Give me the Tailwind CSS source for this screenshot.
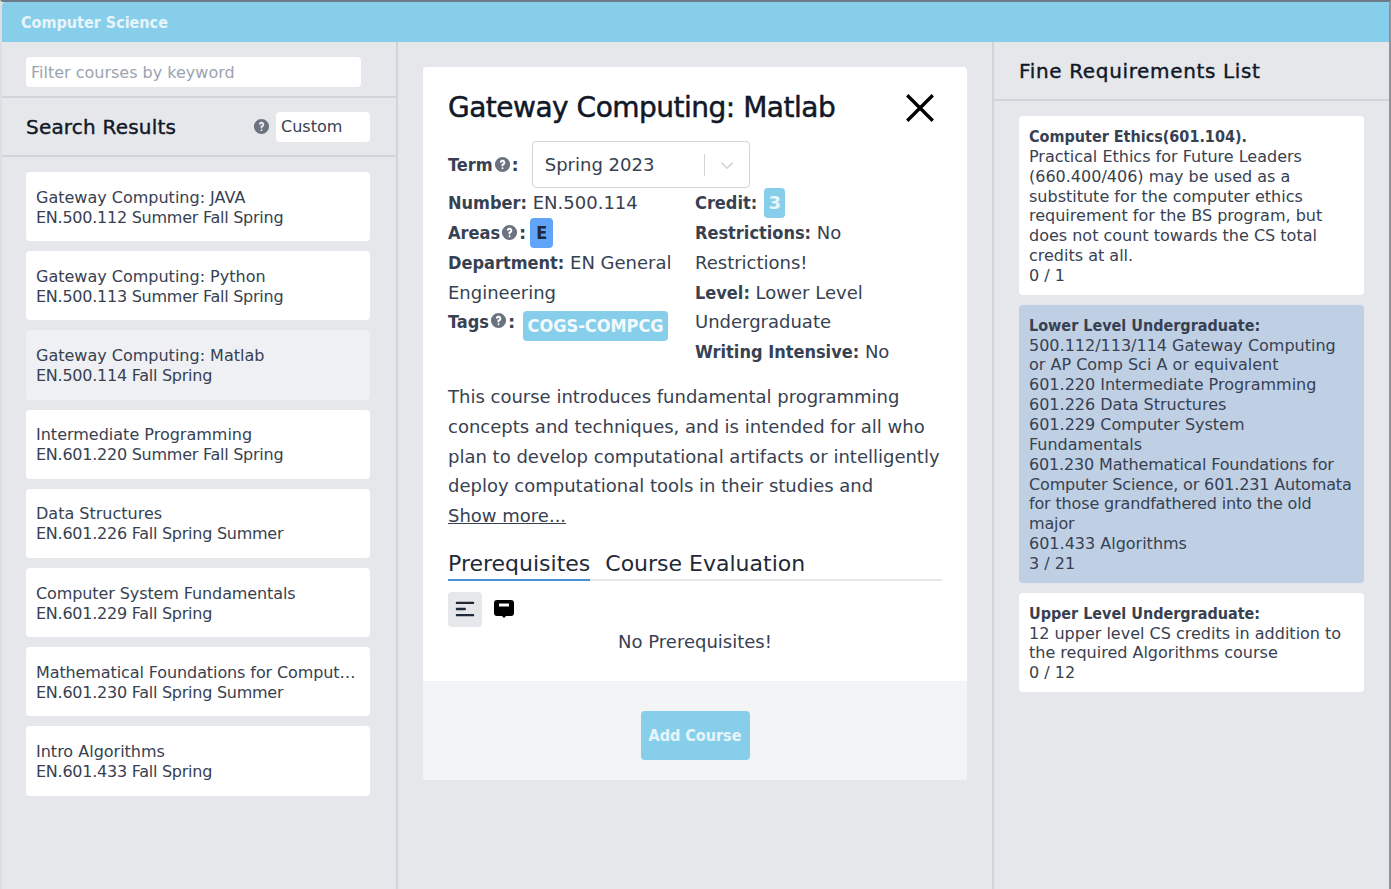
<!DOCTYPE html>
<html lang="en">

<head>
  <meta charset="UTF-8" />
  <meta name="viewport" content="width=device-width, initial-scale=1" />
  <script src="https://cdn.jsdelivr.net/npm/@tailwindcss/browser@4"></script>
  <title>Computer Science</title>
</head>

<body class="h-[889px] overflow-hidden border-t-2 border-r-2 border-l-2 border-t-[#6b7b88] border-r-[#8b939c] border-l-[#dcdfe4] bg-[#e5e7eb] font-['DejaVu_Sans',sans-serif] text-[#374151]">
  <div class="flex h-[40px] items-center rounded-tl-sm bg-[#87ceeb] pl-[19px] pt-[2px] font-['DejaVu_Sans_Condensed',sans-serif] text-[16px] font-bold text-white/80">Computer Science</div>

  <div class="flex h-[847px] bg-[#e5e7eb]">
    <!-- search column -->
    <aside class="w-[396px] shrink-0 border-r-2 border-[#d1d5db]">
      <div class="h-[56px] border-b-2 border-[#d1d5db] px-6 pt-[15px]">
        <input placeholder="Filter courses by keyword" class="h-[30px] w-[335px] rounded bg-white px-[5px] text-[16px] placeholder:text-[#9ca3af]" />
      </div>
      <div class="flex h-[59px] items-center border-b-2 border-[#d1d5db] pl-6 pr-[26px]">
        <h2 class="text-[20px] tracking-[0.2px] text-[#111827] [-webkit-text-stroke:0.4px]">Search Results</h2>
        <svg class="ml-auto h-[19px] w-[19px] text-[#6b7280]" viewBox="0 0 20 20" fill="currentColor"><path fill-rule="evenodd" d="M18 10a8 8 0 1 1-16 0 8 8 0 0 1 16 0Zm-8-3a1 1 0 0 0-.87.5 1 1 0 1 1-1.73-1A3 3 0 0 1 13 8a3 3 0 0 1-2 2.83V11a1 1 0 1 1-2 0v-1a1 1 0 0 1 1-1 1 1 0 1 0 0-2Zm0 8a1 1 0 1 0 0-2 1 1 0 0 0 0 2Z" clip-rule="evenodd" /></svg>
        <div class="ml-[5px] flex h-[30px] w-[94px] items-center rounded bg-white px-[5px] text-[16px]">Custom</div>
      </div>
      <ul class="flex flex-col gap-[10px] pl-6 pr-[26px] pt-[15px] text-[16px] leading-[20px]">
        <li class="flex h-[69.2px] flex-col justify-center rounded bg-white px-[10px] pt-[2px]"><p>Gateway Computing: JAVA</p><p class="tracking-[-0.25px]">EN.500.112 Summer Fall Spring</p></li>
        <li class="flex h-[69.2px] flex-col justify-center rounded bg-white px-[10px] pt-[2px]"><p>Gateway Computing: Python</p><p class="tracking-[-0.25px]">EN.500.113 Summer Fall Spring</p></li>
        <li class="flex h-[69.2px] flex-col justify-center rounded bg-[#eef0f3] px-[10px] pt-[2px]"><p>Gateway Computing: Matlab</p><p class="tracking-[-0.25px]">EN.500.114 Fall Spring</p></li>
        <li class="flex h-[69.2px] flex-col justify-center rounded bg-white px-[10px] pt-[2px]"><p>Intermediate Programming</p><p class="tracking-[-0.25px]">EN.601.220 Summer Fall Spring</p></li>
        <li class="flex h-[69.2px] flex-col justify-center rounded bg-white px-[10px] pt-[2px]"><p>Data Structures</p><p class="tracking-[-0.25px]">EN.601.226 Fall Spring Summer</p></li>
        <li class="flex h-[69.2px] flex-col justify-center rounded bg-white px-[10px] pt-[2px]"><p class="tracking-[-0.1px]">Computer System Fundamentals</p><p class="tracking-[-0.25px]">EN.601.229 Fall Spring</p></li>
        <li class="flex h-[69.2px] flex-col justify-center rounded bg-white px-[10px] pt-[2px]"><p class="truncate tracking-[-0.1px]">Mathematical Foundations for Computer Science</p><p class="tracking-[-0.25px]">EN.601.230 Fall Spring Summer</p></li>
        <li class="flex h-[69.2px] flex-col justify-center rounded bg-white px-[10px] pt-[2px]"><p>Intro Algorithms</p><p class="tracking-[-0.25px]">EN.601.433 Fall Spring</p></li>
      </ul>
    </aside>

    <!-- course details -->
    <main class="w-[596px] shrink-0 border-r-2 border-[#d1d5db] pl-[25px] pt-[25px]">
      <section class="flex h-[713px] w-[544px] flex-col overflow-hidden rounded bg-white">
        <div class="h-[614px] px-[25px] pt-[21px] text-[18px] leading-[29.8px]">
          <div class="flex h-[40px] items-center justify-between">
            <h1 class="text-[28px] tracking-[-0.5px] text-[#111827] [-webkit-text-stroke:0.5px]">Gateway Computing: Matlab</h1>
            <svg class="mr-[4px] h-[36px] w-[36px] text-black" viewBox="0 0 24 24" fill="none" stroke="currentColor" stroke-width="2.2"><path d="M3.5 3.5l17 17M20.5 3.5l-17 17" /></svg>
          </div>
          <div class="mt-[13px] flex h-[47px] items-center">
            <b class="font-['DejaVu_Sans_Condensed',sans-serif]">Term</b>
            <svg class="h-[19px] w-[19px] text-[#6b7280]" viewBox="0 0 20 20" fill="currentColor"><path fill-rule="evenodd" d="M18 10a8 8 0 1 1-16 0 8 8 0 0 1 16 0Zm-8-3a1 1 0 0 0-.87.5 1 1 0 1 1-1.73-1A3 3 0 0 1 13 8a3 3 0 0 1-2 2.83V11a1 1 0 1 1-2 0v-1a1 1 0 0 1 1-1 1 1 0 1 0 0-2Zm0 8a1 1 0 1 0 0-2 1 1 0 0 0 0 2Z" clip-rule="evenodd" /></svg>
            <b>:</b>
            <div class="ml-[13px] flex h-[47px] w-[218px] items-center rounded border border-[#d1d5db] pl-[12px]">
              <span>Spring 2023</span>
              <span class="ml-auto h-[22px] w-px bg-[#d1d5db]"></span>
              <svg class="mx-[14px] h-[16px] w-[16px] text-[#d1d5db]" viewBox="0 0 20 20" fill="none" stroke="currentColor" stroke-width="2"><path d="M3 7l7 7 7-7" /></svg>
            </div>
          </div>
          <div class="flex">
            <div class="w-[247px] shrink-0">
              <p class="whitespace-nowrap"><b class="font-['DejaVu_Sans_Condensed',sans-serif]">Number:</b> EN.500.114</p>
              <p class="flex items-center"><b class="font-['DejaVu_Sans_Condensed',sans-serif]">Areas</b>
                <svg class="h-[19px] w-[19px] text-[#6b7280]" viewBox="0 0 20 20" fill="currentColor"><path fill-rule="evenodd" d="M18 10a8 8 0 1 1-16 0 8 8 0 0 1 16 0Zm-8-3a1 1 0 0 0-.87.5 1 1 0 1 1-1.73-1A3 3 0 0 1 13 8a3 3 0 0 1-2 2.83V11a1 1 0 1 1-2 0v-1a1 1 0 0 1 1-1 1 1 0 1 0 0-2Zm0 8a1 1 0 1 0 0-2 1 1 0 0 0 0 2Z" clip-rule="evenodd" /></svg>
                <b>:</b><span class="ml-[4px] flex h-[30px] w-[23px] items-center justify-center rounded bg-[#60a5fa] font-['DejaVu_Sans_Condensed',sans-serif] font-bold text-[#1f2937]">E</span></p>
              <p><b class="font-['DejaVu_Sans_Condensed',sans-serif]">Department:</b> EN General</p>
              <p>Engineering</p>
              <div class="flex items-start"><b class="font-['DejaVu_Sans_Condensed',sans-serif]">Tags</b>
                <svg class="mt-[4px] h-[19px] w-[19px] text-[#6b7280]" viewBox="0 0 20 20" fill="currentColor"><path fill-rule="evenodd" d="M18 10a8 8 0 1 1-16 0 8 8 0 0 1 16 0Zm-8-3a1 1 0 0 0-.87.5 1 1 0 1 1-1.73-1A3 3 0 0 1 13 8a3 3 0 0 1-2 2.83V11a1 1 0 1 1-2 0v-1a1 1 0 0 1 1-1 1 1 0 1 0 0-2Zm0 8a1 1 0 1 0 0-2 1 1 0 0 0 0 2Z" clip-rule="evenodd" /></svg>
                <b>:</b><span class="ml-[8px] mt-[4px] flex h-[30px] w-[145px] items-center justify-center whitespace-nowrap rounded bg-[#87ceeb] font-['DejaVu_Sans_Condensed',sans-serif] font-bold text-white/90">COGS-COMPCG</span></div>
            </div>
            <div class="w-[220px]">
              <p class="flex items-center"><b class="font-['DejaVu_Sans_Condensed',sans-serif]">Credit:</b><span class="ml-[7px] flex h-[30px] w-[21px] items-center justify-center rounded bg-[#87ceeb] font-bold text-white/80">3</span></p>
              <p><b class="font-['DejaVu_Sans_Condensed',sans-serif]">Restrictions:</b> No</p>
              <p>Restrictions!</p>
              <p><b class="font-['DejaVu_Sans_Condensed',sans-serif]">Level:</b> Lower Level</p>
              <p>Undergraduate</p>
              <p><b class="font-['DejaVu_Sans_Condensed',sans-serif]">Writing Intensive:</b> No</p>
            </div>
          </div>
          <p class="mt-[15px]">This course introduces fundamental programming concepts and techniques, and is intended for all who plan to develop computational artifacts or intelligently deploy computational tools in their studies and</p>
          <p class="underline">Show more...</p>
          <div class="mt-[14px] flex h-[36px] border-b-2 border-[#e5e7eb] pt-[4px] text-[22px] text-[#1f2937]">
            <div class="h-[32px] border-b-2 border-[#4a90d9]">Prerequisites</div>
            <div class="ml-[15px]">Course Evaluation</div>
          </div>
          <div class="mt-[11px] flex items-center">
            <div class="flex h-[35px] w-[34px] items-center justify-center rounded bg-[#e5e7eb]">
              <svg class="h-[22px] w-[22px] text-[#1f2937]" viewBox="0 0 24 24" fill="currentColor"><rect x="2" y="4" width="20" height="2.6" rx="1" /><rect x="2" y="10.7" width="11" height="2.6" rx="1" /><rect x="2" y="17.4" width="20" height="2.6" rx="1" /></svg>
            </div>
            <svg class="ml-[10px] h-[24px] w-[24px] text-black" viewBox="0 0 24 24" fill="currentColor"><path fill-rule="evenodd" d="M5 3h14a3 3 0 0 1 3 3v10a3 3 0 0 1-3 3h-5l-2 2-2-2H5a3 3 0 0 1-3-3V6a3 3 0 0 1 3-3Zm2 3.5v3h10v-3H7Z" clip-rule="evenodd" /></svg>
          </div>
          <p class="text-center">No Prerequisites!</p>
        </div>
        <div class="flex flex-1 justify-center bg-[#f3f4f6] pt-[30px]">
          <button class="h-[49px] w-[109px] rounded bg-[#87ceeb] font-['DejaVu_Sans_Condensed',sans-serif] text-[16px] font-bold text-white/80">Add Course</button>
        </div>
      </section>
    </main>

    <!-- requirements column -->
    <aside class="flex-1">
      <div class="flex h-[59px] items-center border-b-2 border-[#d1d5db] pl-[25px] text-[20px] tracking-[0.65px] text-[#111827] [-webkit-text-stroke:0.4px]">Fine Requirements List</div>
      <ul class="flex flex-col gap-[10px] pl-[25px] pr-[25px] pt-[15px] text-[16px] leading-[19.85px]">
        <li class="rounded bg-white px-[10px] pb-[9px] pt-[11px]"><p class="font-['DejaVu_Sans_Condensed',sans-serif] font-bold">Computer Ethics(601.104).</p><p>Practical Ethics for Future Leaders (660.400/406) may be used as a substitute for the computer ethics requirement for the BS program, but does not count towards the CS total credits at all.</p><p>0 / 1</p></li>
        <li class="rounded bg-[#bfd0e5] px-[10px] pb-[9px] pt-[11px]"><p class="font-['DejaVu_Sans_Condensed',sans-serif] font-bold">Lower Level Undergraduate:</p><p>500.112/113/114 Gateway Computing or AP Comp Sci A or equivalent</p><p>601.220 Intermediate Programming</p><p>601.226 Data Structures</p><p>601.229 Computer System Fundamentals</p><p class="mr-[-8px] tracking-[-0.15px]">601.230 Mathematical Foundations for Computer Science, or 601.231 Automata for those grandfathered into the old<br />major</p><p>601.433 Algorithms</p><p>3 / 21</p></li>
        <li class="rounded bg-white px-[10px] pb-[9px] pt-[11px]"><p class="font-['DejaVu_Sans_Condensed',sans-serif] font-bold">Upper Level Undergraduate:</p><p>12 upper level CS credits in addition to the required Algorithms course</p><p>0 / 12</p></li>
      </ul>
    </aside>
  </div>
</body>

</html>
